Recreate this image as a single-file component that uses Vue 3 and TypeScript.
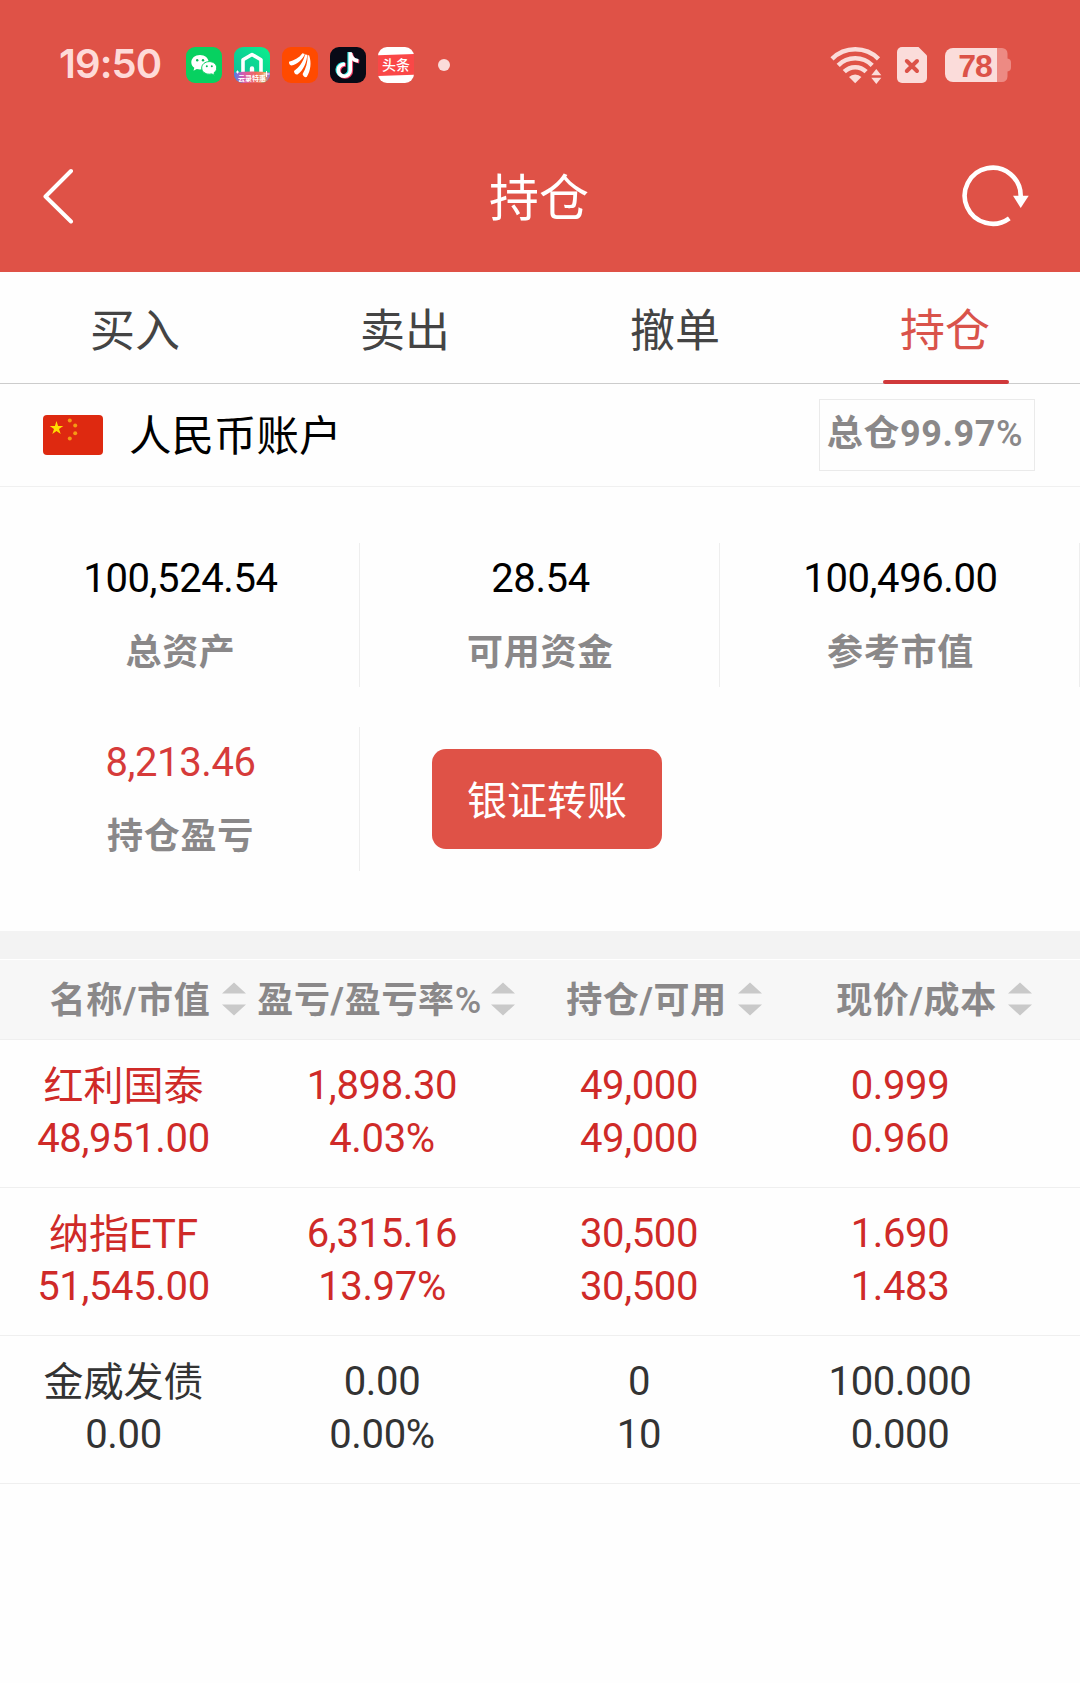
<script setup lang="ts">
interface Stat { value: string; label: string }
interface Holding { up: boolean; cells: [string, string][] }

const tabs: string[] = ['买入', '卖出', '撤单', '持仓']
const activeTab = '持仓'

const stats: Stat[] = [
  { value: '100,524.54', label: '总资产' },
  { value: '28.54', label: '可用资金' },
  { value: '100,496.00', label: '参考市值' },
]

const columns: { text: string; suffix?: string }[] = [
  { text: '名称/市值' },
  { text: '盈亏/盈亏率', suffix: '%' },
  { text: '持仓/可用' },
  { text: '现价/成本' },
]

const holdings: Holding[] = [
  { up: true, cells: [['红利国泰', '48,951.00'], ['1,898.30', '4.03%'], ['49,000', '49,000'], ['0.999', '0.960']] },
  { up: true, cells: [['纳指ETF', '51,545.00'], ['6,315.16', '13.97%'], ['30,500', '30,500'], ['1.690', '1.483']] },
  { up: false, cells: [['金威发债', '0.00'], ['0.00', '0.00%'], ['0', '10'], ['100.000', '0.000']] },
]
</script>

<template>
  <div class="screen">
    <header class="top">
      <div class="status">
        <span class="time">19:50</span>
        <div class="apps">
          <svg class="app" viewBox="0 0 36 36">
            <rect width="36" height="36" rx="9" fill="#07d160" />
            <path d="M14 8c-5 0-8.700 3.200-8.700 7.200 0 2.300 1.200 4.200 3 5.500l-.8 3 3.300-1.700c1 .3 2.100.4 3.200.4 5 0 8.700-3.200 8.700-7.200S19 8 14 8z" fill="#fff" />
            <path d="M23.300 14.600c-4.300 0-7.600 2.800-7.600 6.300s3.300 6.300 7.600 6.300c.9 0 1.700-.1 2.500-.3l2.900 1.500-.7-2.600c1.600-1.100 2.700-2.900 2.700-4.900 0-3.500-3.200-6.300-7.400-6.300z" fill="#fff" stroke="#07d160" stroke-width="1" />
            <g fill="#07b855"><circle cx="11.200" cy="13.200" r="1.200" /><circle cx="17" cy="13.200" r="1.200" /><circle cx="20.800" cy="19.300" r="1" /><circle cx="25.800" cy="19.300" r="1" /></g>
          </svg>
          <svg class="app" viewBox="0 0 36 36">
            <defs>
              <clipPath id="tile"><rect width="36" height="36" rx="9" /></clipPath>
              <linearGradient id="mint" x1="0" y1="1" x2="1" y2="0"><stop offset="0" stop-color="#10b79c" /><stop offset="1" stop-color="#0af08c" /></linearGradient>
              <linearGradient id="ribbon" x1="0" x2="1"><stop offset="0" stop-color="#4c7fe8" /><stop offset=".25" stop-color="#d45bb0" /><stop offset=".6" stop-color="#f0685c" /><stop offset=".85" stop-color="#e8a060" /><stop offset="1" stop-color="#9a62dc" /></linearGradient>
            </defs>
            <g clip-path="url(#tile)">
              <rect width="36" height="36" fill="url(#mint)" />
              <path d="M9 26V12.800L18 7.500l9 5.300V26" fill="none" stroke="#fff" stroke-width="3.600" stroke-linejoin="round" />
              <path d="M15.800 26v-4.500a2.200 2.200 0 0 1 4.400 0V26z" fill="#fff" />
              <path d="M0 25.500q18-2 36 0V36H0z" fill="url(#ribbon)" />
              <path d="M32.500 24v6M29.500 27h6M3.500 23.500v3M2 25h3" stroke="#fff" stroke-width="1" />
              <text class="ribbon" x="18" y="33.800" text-anchor="middle">云录特惠</text>
            </g>
          </svg>
          <svg class="app" viewBox="0 0 36 36">
            <rect width="36" height="36" rx="9" fill="#ff4a00" />
            <path d="M7 14.800C12 13.500 17 11 20.500 6.300l2.300.7C21 12 15.500 17.700 9.300 18.500 7.600 18.500 6.900 16.500 7 14.800z" fill="#fff" />
            <path d="M12 24c5-3.700 9.200-9 11.100-16.500l2.100.3C25 15 21.500 23.500 15.500 27.400c-2.100.4-3.500-1.400-3.500-3.400z" fill="#fff" />
            <path d="M20.600 27c3.300-5.500 5.200-11.500 5-19l1.600.6c2.400 7 1.500 15.200-2.500 21.400-1.900.6-3.700-1-4.100-3z" fill="#fff" />
          </svg>
          <svg class="app" viewBox="0 0 36 36">
            <rect width="36" height="36" rx="9" fill="#080a16" />
            <g fill="none" stroke-width="3.600">
              <path d="M19.200 5v17.700a6 6 0 1 1-5.300-5.900M19.200 6c.6 4.300 3.600 7.200 8 7.600" stroke="#25e5e2" />
              <path d="M21.300 6v17.900a6 6 0 1 1-5.300-5.900M21.300 7c.6 4.300 3.600 7.200 8 7.600" stroke="#f23a63" />
              <path d="M20.300 5.300v17.900a6 6 0 1 1-5.300-5.900M20.300 6.300c.6 4.300 3.600 7.200 8 7.600" stroke="#fff" />
            </g>
          </svg>
          <svg class="app" viewBox="0 0 36 36">
            <rect width="36" height="36" rx="9" fill="#fff" />
            <path d="M0 8.200 36 7v20.800L0 29z" fill="#fa4747" />
            <text class="toutiao" x="18" y="23" text-anchor="middle">头条</text>
          </svg>
        </div>
        <i class="dot"></i>
        <div class="signals">
          <svg width="52" height="38" viewBox="0 0 52 38">
            <g fill="none" stroke="#fbdcda" stroke-width="4.500">
              <path d="M2 12.800a33 33 0 0 1 46.500 0" />
              <path d="M8.200 19.300a24 24 0 0 1 34 0" />
              <path d="M14.300 25.700a15.500 15.500 0 0 1 21.800 0" />
            </g>
            <path d="M25.200 37.300 19 31a8.800 8.800 0 0 1 12.400 0z" fill="#fbdcda" />
            <path d="M46.300 23l5 6.300H41.300zM46.300 38l5-6.300H41.300z" fill="#fbdcda" />
          </svg>
          <svg class="sim" width="30" height="36" viewBox="0 0 30 36">
            <path d="M5 0h16.500L30 8.500V31a5 5 0 0 1-5 5H5a5 5 0 0 1-5-5V5a5 5 0 0 1 5-5z" fill="#fbdcda" />
            <path d="M9.800 14l10.200 10M20 14 9.800 24" stroke="#dc5248" stroke-width="4" stroke-linecap="round" />
          </svg>
          <svg class="battery" width="66" height="34" viewBox="0 0 66 34">
            <path d="M52 0h5a5.500 5.500 0 0 1 5.500 5.500V10.500q3.500.5 3.500 4v5q0 3.500-3.500 4V28.500A5.500 5.500 0 0 1 57 34h-5z" fill="#ed8a83" />
            <path d="M8 0h44v34H8a8 8 0 0 1-8-8V8a8 8 0 0 1 8-8z" fill="#fbdcda" />
            <text class="level" x="30" y="28.500" text-anchor="middle">78</text>
          </svg>
        </div>
      </div>
      <nav class="bar">
        <svg class="back" width="32" height="56" viewBox="0 0 32 56">
          <path d="M29 3 3.500 28.500 29 53.500" fill="none" stroke="#fff" stroke-width="4" stroke-linecap="round" stroke-linejoin="round" />
        </svg>
        <h1>持仓</h1>
        <svg class="refresh" width="68" height="62" viewBox="0 0 68 62">
          <path d="M58.700 31A28 28 0 1 0 47.300 53.300" fill="none" stroke="#fff" stroke-width="4.600" />
          <path d="M51 30.700h15.700L58.700 43z" fill="#fff" />
        </svg>
      </nav>
    </header>

    <div class="tabs">
      <div v-for="t in tabs" :key="t" class="tab" :class="{ active: t === activeTab }">{{ t }}</div>
    </div>

    <section class="account">
      <svg width="60" height="40" viewBox="0 0 60 40">
        <rect width="60" height="40" rx="4" fill="#de2910" />
        <path d="M13.500 6l1.600 5h5.200L16 14.100l1.700 5-4.200-3.100-4.200 3.100 1.700-5L6.700 11h5.200z" fill="#ffde00" />
        <g fill="#f59a14"><circle cx="26.800" cy="5.500" r="2" /><circle cx="32.200" cy="10.500" r="2" /><circle cx="32.200" cy="18.300" r="2" /><circle cx="26.800" cy="23.500" r="2" /></g>
      </svg>
      <span class="name">人民币账户</span>
      <span class="ratio">总仓99.97<span class="thin">%</span></span>
    </section>

    <section class="stats">
      <div v-for="s in stats" :key="s.label" class="stat">
        <b>{{ s.value }}</b>
        <span>{{ s.label }}</span>
      </div>
      <div class="stat profit">
        <b>8,213.46</b>
        <span>持仓盈亏</span>
      </div>
      <div class="action"><button>银证转账</button></div>
    </section>

    <section class="table">
      <div class="thead">
        <div v-for="c in columns" :key="c.text" class="th">
          <span>{{ c.text }}<span v-if="c.suffix" class="thin">{{ c.suffix }}</span></span>
          <svg width="24" height="34" viewBox="0 0 24 34">
            <path d="M12 .5 24 11.500H0zM12 33.500 24 22.500H0z" fill="#c9c9c9" />
          </svg>
        </div>
      </div>
      <div v-for="(h, i) in holdings" :key="i" class="row" :class="{ up: h.up }">
        <div v-for="(c, j) in h.cells" :key="j" class="cell">
          <span :class="j === 0 ? 'title' : 'num'">{{ c[0] }}</span>
          <span class="num">{{ c[1] }}</span>
        </div>
      </div>
    </section>
  </div>
</template>

<style>
body { background: #fefefe; }
</style>

<style scoped>
.screen {
  width: 1080px;
  height: 1683px;
  overflow: hidden;
  background: #fefefe;
  font-family: Roboto, "Noto Sans CJK SC", sans-serif;
  color: #333;
}
.top { height: 272px; background: #df5247; }
.status { display: flex; align-items: center; height: 130px; padding-left: 59px; }
.time {
  width: 127px;
  padding-bottom: 2px;
  font: 600 40px/48px Inter, sans-serif;
  letter-spacing: -0.9px;
  color: #fedad8;
}
.apps { display: flex; gap: 12px; }
.app { width: 36px; height: 36px; }
.ribbon { font: 700 7px "Noto Sans CJK SC", sans-serif; fill: #fff; }
.toutiao { font: 500 14px "Noto Sans CJK SC", sans-serif; fill: #fff; }
.dot { width: 12px; height: 12px; margin-left: 24px; border-radius: 50%; background: #fbdcda; }
.signals { display: flex; align-items: center; margin-left: auto; padding-right: 69px; }
.sim { margin-left: 15px; }
.battery { margin-left: 18px; }
.level { font: 700 32px "Liberation Sans", sans-serif; letter-spacing: -1px; fill: #dc5248; }
.bar { display: flex; align-items: center; justify-content: space-between; height: 131px; padding: 0 50px 0 42px; }
h1 { margin: 7px 0 0 42px; font-size: 50px; line-height: 60px; font-weight: 400; color: #fff; }
.tabs { display: flex; height: 111px; border-bottom: 1px solid #ccc; }
.tab {
  position: relative;
  flex: 1;
  padding-top: 9px;
  text-align: center;
  font-size: 45px;
  line-height: 102px;
  color: #444;
}
.tab.active { color: #d9534b; }
.tab.active::after {
  content: "";
  position: absolute;
  left: 73px;
  bottom: -1px;
  width: 126px;
  height: 4px;
  border-radius: 2px;
  background: #d0393b;
}
.account {
  display: flex;
  align-items: center;
  box-sizing: border-box;
  height: 103px;
  padding: 0 45px 0 43px;
  border-bottom: 1px solid #f0f0f0;
}
.name { margin-left: 26px; padding-top: 3px; font-size: 42.500px; line-height: 60px; color: #000; }
.ratio {
  box-sizing: border-box;
  width: 216px;
  height: 72px;
  margin-left: auto;
  padding-right: 4px;
  border: 1px solid #eaeaea;
  text-align: center;
  font-size: 36px;
  line-height: 69px;
  font-weight: 700;
  letter-spacing: 0.6px;
  color: #8a8889;
}
.thin { font-weight: 500; }
.stats { display: grid; grid-template-columns: repeat(3, 360px); row-gap: 40px; padding: 56px 0 60px; }
.stat {
  display: flex;
  flex-direction: column;
  align-items: center;
  gap: 26px;
  box-sizing: border-box;
  height: 144px;
  padding: 12px 0 0 2px;
  border-right: 1px solid #eee;
}
.stat b { font-size: 40px; line-height: 48px; font-weight: 400; letter-spacing: -0.4px; color: #000; }
.stat span { font-size: 36px; line-height: 48px; font-weight: 700; letter-spacing: 0.7px; color: #8a8889; }
.stat.profit b { color: #d63b3a; }
.action { padding: 22px 0 0 72px; }
button {
  display: block;
  width: 230px;
  height: 100px;
  padding: 0 0 3px;
  border: 0;
  border-radius: 14px;
  background: #df5247;
  color: #fff;
  font-family: inherit;
  font-size: 40px;
}
.table { border-top: 28px solid #f3f3f3; }
.thead {
  display: grid;
  grid-template-columns: 245.500px 269.500px 247px 270px;
  box-sizing: border-box;
  height: 81px;
  border-top: 1px solid #fff;
  border-bottom: 1px solid #efefef;
  background: #f7f7f7;
}
.th {
  display: flex;
  align-items: center;
  justify-content: flex-end;
  gap: 11px;
  font-size: 36px;
  line-height: 48px;
  font-weight: 700;
  letter-spacing: 0.7px;
  color: #8a8889;
  white-space: nowrap;
}
.th > span { padding-top: 3px; }
.th svg { margin-bottom: 2px; }
.th:nth-child(2) { gap: 9px; }
.row {
  display: grid;
  grid-template-columns: 247px 270px 244px 278px;
  box-sizing: border-box;
  height: 148px;
  padding-top: 19px;
  border-bottom: 1px solid #efefef;
}
.row.up { color: #cf2a28; }
.cell { display: flex; flex-direction: column; align-items: center; font-size: 40px; line-height: 53px; }
.num { letter-spacing: -0.35px; }
.title { height: 52px; padding-top: 1px; }
</style>
